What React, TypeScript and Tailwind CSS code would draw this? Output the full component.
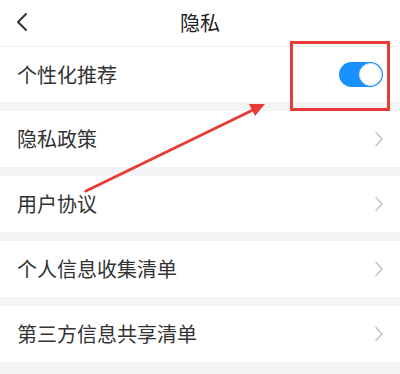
import React from "react";

const Chevron = () => (
  <svg width="10" height="16" viewBox="0 0 10 16" className="shrink-0">
    <path d="M2 1.5 L8 8 L2 14.5" fill="none" stroke="#c4c4c4" strokeWidth="1.6" strokeLinecap="round" strokeLinejoin="round" />
  </svg>
);

const Row = ({ label, h = "h-[56px]", children }: { label: string; h?: string; children?: React.ReactNode }) => (
  <div className={`${h} bg-white flex items-center justify-between pl-[17px] pr-[16px]`}>
    <span className="text-[20px] text-[#333333] leading-none">{label}</span>
    {children ?? <Chevron />}
  </div>
);

export default function App() {
  return (
    <div
      className="relative w-[400px] h-[374px] bg-[#f3f4f6] overflow-hidden"
      style={{ fontFamily: '"Noto Sans CJK SC", "Noto Sans", sans-serif' }}
    >
      <div className="h-[47px] bg-white border-b border-[#ececec] flex items-center justify-center relative">
        <svg width="14" height="20" viewBox="0 0 14 20" className="absolute left-[15px] top-[12px]">
          <path d="M11 2 L3 10 L11 18" fill="none" stroke="#333" strokeWidth="2" strokeLinecap="round" strokeLinejoin="round" />
        </svg>
        <span className="text-[20px] text-[#222222] leading-none">隐私</span>
      </div>
      <div className="flex flex-col gap-[9px]">
        <Row label="个性化推荐" h="h-[55px]">
          <div className="w-[44px] h-[25px] rounded-full bg-[#1890ff] flex items-center justify-end pr-[1px] mr-[1px]">
            <div className="w-[23px] h-[23px] rounded-full bg-white border border-[#d9e6f2]" />
          </div>
        </Row>
        <Row label="隐私政策" />
        <Row label="用户协议" />
        <Row label="个人信息收集清单" />
        <Row label="第三方信息共享清单" />
      </div>
      <div className="absolute left-[290px] top-[41px] w-[100px] h-[70px] border-[3px] border-[#e53d35]" />
      <svg className="absolute left-0 top-0" width="400" height="374" viewBox="0 0 400 374">
        <line x1="86" y1="191" x2="255" y2="109" stroke="#e53d35" strokeWidth="3" strokeLinecap="round" />
        <polygon points="265,104 249,104 255,116" fill="#e53d35" />
      </svg>
    </div>
  );
}
